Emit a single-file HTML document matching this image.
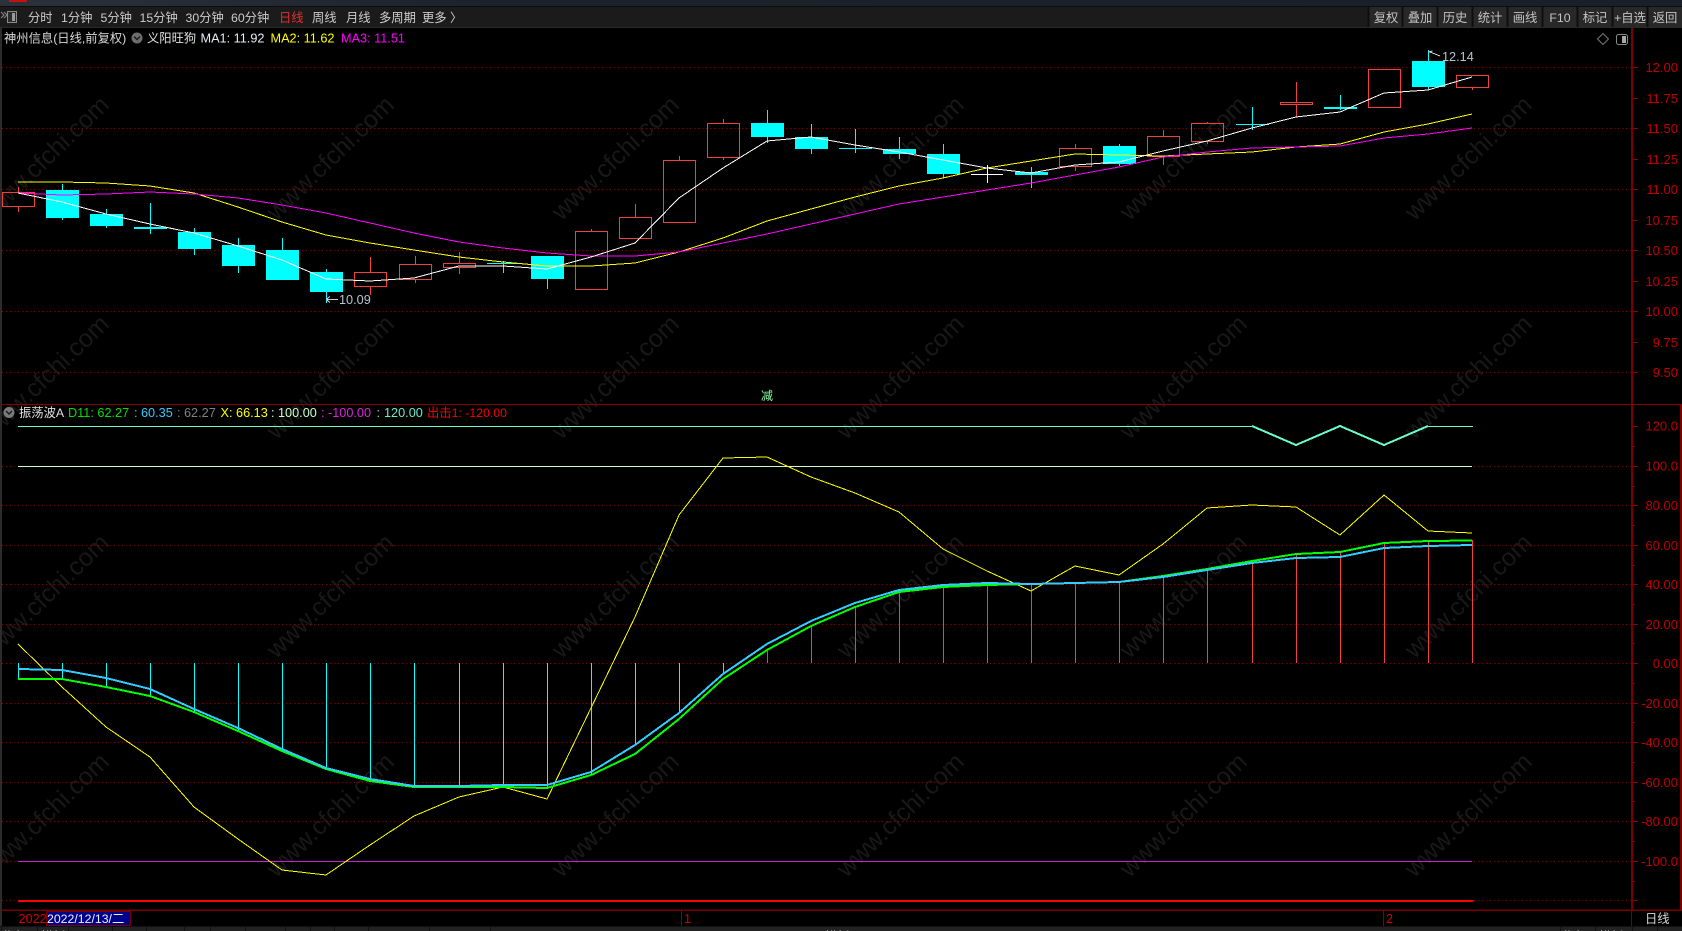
<!DOCTYPE html>
<html><head><meta charset="utf-8"><title>神州信息</title>
<style>
html,body{margin:0;padding:0;background:#000;width:1682px;height:931px;overflow:hidden}
svg{display:block}
text{font-family:"Liberation Sans","Noto Sans CJK SC",sans-serif;font-size:12.7px}
.wm text{font-size:25px;fill:#181818;text-anchor:middle}
.tb text{fill:#cccccc;font-size:12.3px}
.btn text{fill:#c4c4c4;text-anchor:middle;font-size:12.3px}
.ax text{fill:#c00000;text-anchor:end;font-size:13px}
text.cj{font-size:12.3px}
.c{shape-rendering:crispEdges}
</style></head><body>
<svg width="1682" height="931" viewBox="0 0 1682 931" xmlns="http://www.w3.org/2000/svg">
<defs><linearGradient id="tg" x1="0" x2="1" y1="0" y2="0"><stop offset="0" stop-color="#2c323c"/><stop offset=".3" stop-color="#1c222b"/><stop offset="1" stop-color="#1a2029"/></linearGradient></defs>
<rect width="1682" height="931" fill="#000"/>

<!-- watermark -->
<g class="wm">
<text transform="translate(51,164) rotate(-44)">www.cfchi.com</text><text transform="translate(336,164) rotate(-44)">www.cfchi.com</text><text transform="translate(621,164) rotate(-44)">www.cfchi.com</text><text transform="translate(906,164) rotate(-44)">www.cfchi.com</text><text transform="translate(1189,164) rotate(-44)">www.cfchi.com</text><text transform="translate(1474,164) rotate(-44)">www.cfchi.com</text>
<text transform="translate(51,383) rotate(-44)">www.cfchi.com</text><text transform="translate(336,383) rotate(-44)">www.cfchi.com</text><text transform="translate(621,383) rotate(-44)">www.cfchi.com</text><text transform="translate(906,383) rotate(-44)">www.cfchi.com</text><text transform="translate(1189,383) rotate(-44)">www.cfchi.com</text><text transform="translate(1474,383) rotate(-44)">www.cfchi.com</text>
<text transform="translate(51,602) rotate(-44)">www.cfchi.com</text><text transform="translate(336,602) rotate(-44)">www.cfchi.com</text><text transform="translate(621,602) rotate(-44)">www.cfchi.com</text><text transform="translate(906,602) rotate(-44)">www.cfchi.com</text><text transform="translate(1189,602) rotate(-44)">www.cfchi.com</text><text transform="translate(1474,602) rotate(-44)">www.cfchi.com</text>
<text transform="translate(51,821) rotate(-44)">www.cfchi.com</text><text transform="translate(336,821) rotate(-44)">www.cfchi.com</text><text transform="translate(621,821) rotate(-44)">www.cfchi.com</text><text transform="translate(906,821) rotate(-44)">www.cfchi.com</text><text transform="translate(1189,821) rotate(-44)">www.cfchi.com</text><text transform="translate(1474,821) rotate(-44)">www.cfchi.com</text>
</g>

<!-- top strips -->
<rect width="1682" height="6" fill="url(#tg)"/>
<rect x="9" y="0" width="18" height="2" fill="#c41010"/>
<rect y="6" width="1682" height="1" fill="#0c0c0c"/>
<rect y="7" width="1682" height="20" fill="#1b1b1b"/>
<g class="c">
<rect x="1369" y="7" width="313" height="20" fill="#282828"/>
<path d="M1368.5 7V27M1402.5 7V27M1437.5 7V27M1472.5 7V27M1507.5 7V27M1542.5 7V27M1577.5 7V27M1612.5 7V27M1647.5 7V27" stroke="#0e0e0e" stroke-width="2"/>
</g>
<!-- left toolbar icon -->
<path d="M1 12l3 3-3 3M4 12l3 3-3 3" stroke="#8a8a8a" fill="none"/>
<rect x="7.5" y="11.5" width="9" height="11" fill="#2a2a2a" stroke="#8a8a8a"/>
<rect x="12" y="13" width="3" height="8" fill="#9a9a9a"/>

<g class="tb">
<text x="28" y="22">分时</text><text x="61" y="22">1分钟</text><text x="100.5" y="22">5分钟</text><text x="139.5" y="22">15分钟</text><text x="185.5" y="22">30分钟</text><text x="231" y="22">60分钟</text>
<text x="279" y="22" style="fill:#e83030">日线</text><text x="312" y="22">周线</text><text x="346" y="22">月线</text><text x="379" y="22">多周期</text><text x="422" y="22">更多 〉</text>
</g>
<g class="btn">
<text x="1386" y="22">复权</text><text x="1420" y="22">叠加</text><text x="1455" y="22">历史</text><text x="1490" y="22">统计</text><text x="1525" y="22">画线</text><text x="1560" y="22">F10</text><text x="1595" y="22">标记</text><text x="1630" y="22">+自选</text><text x="1665" y="22">返回</text>
</g>

<!-- frame lines -->
<g class="c">
<rect x="0" y="27" width="2" height="899" fill="#2c2c2c"/>
<rect x="0" y="27" width="1682" height="1" fill="#2a2a2a"/>
<rect x="2" y="404" width="1680" height="1" fill="#8a0000"/>
<rect x="2" y="909.5" width="1680" height="1.5" fill="#7a0000"/>
<rect x="1631" y="28" width="2" height="882" fill="#7a0000"/>
<rect x="1631" y="910" width="1" height="16" fill="#7a0000"/>
<rect x="1680" y="404" width="2" height="506" fill="#7a0000"/>
</g>

<!-- dotted grid -->
<g class="c" stroke="#800000" stroke-dasharray="1 3" fill="none">
<path d="M2 67.5H1631M2 128.5H1631M2 189.5H1631M2 250.5H1631M2 311.5H1631M2 372.5H1631"/>
<path d="M2 466.5H1631M2 505.5H1631M2 545.5H1631M2 584.5H1631M2 624.5H1631M2 663.5H1631M2 703.5H1631M2 742.5H1631M2 782.5H1631M2 821.5H1631M2 861.5H1631M2 900.5H1631"/>
</g>

<!-- axis ticks -->
<g class="c" stroke="#8a0000" fill="none">
<path d="M1633 67.5h5M1633 98.5h5M1633 128.5h5M1633 159.5h5M1633 189.5h5M1633 220.5h5M1633 250.5h5M1633 281.5h5M1633 311.5h5M1633 342.5h5M1633 372.5h5"/>
<path d="M1633 426.5h5M1633 466.5h5M1633 505.5h5M1633 545.5h5M1633 584.5h5M1633 624.5h5M1633 663.5h5M1633 703.5h5M1633 742.5h5M1633 782.5h5M1633 821.5h5M1633 861.5h5M1633 900.5h5"/>
<path d="M1633 446.5h2M1633 486.5h2M1633 525.5h2M1633 565.5h2M1633 604.5h2M1633 643.5h2M1633 683.5h2M1633 722.5h2M1633 762.5h2M1633 801.5h2M1633 841.5h2M1633 881.5h2"/>
</g>
<g class="ax">
<text x="1678" y="72">12.00</text><text x="1678" y="103">11.75</text><text x="1678" y="133">11.50</text><text x="1678" y="164">11.25</text><text x="1678" y="194">11.00</text><text x="1678" y="225">10.75</text><text x="1678" y="255">10.50</text><text x="1678" y="286">10.25</text><text x="1678" y="316">10.00</text><text x="1678" y="347">9.75</text><text x="1678" y="377">9.50</text>
<text x="1678" y="430.5">120.0</text><text x="1678" y="470.5">100.0</text><text x="1678" y="510">80.00</text><text x="1678" y="550">60.00</text><text x="1678" y="589">40.00</text><text x="1678" y="629">20.00</text><text x="1678" y="668">0.00</text><text x="1678" y="708">-20.00</text><text x="1678" y="747">-40.00</text><text x="1678" y="787">-60.00</text><text x="1678" y="826">-80.00</text><text x="1678" y="866">-100.0</text>
</g>

<!-- candles: cyan -->
<g class="c">
<g stroke="#00ffff" fill="none">
<path d="M62.5 184V220M106.5 209V228M150.5 203V234M194.5 228V255M238.5 238V273M282.5 238V250M326.5 269V303M503.5 261V273M547.5 279V289M767.5 110V143M811.5 124V154M855.5 129V153M899.5 137V159M943.5 144V178M1031.5 167V188M1119.5 144V166M1252.5 107V130M1340.5 95V110M1428.5 50V89"/>
</g>
<g fill="#00ffff">
<rect x="46" y="190" width="33" height="28"/><rect x="90" y="214" width="33" height="12"/><rect x="134" y="227" width="33" height="2"/><rect x="178" y="232" width="33" height="17"/><rect x="222" y="245" width="33" height="21"/><rect x="266" y="250" width="33" height="30"/><rect x="310" y="272" width="33" height="20"/>
<rect x="487" y="263" width="33" height="1"/><rect x="531" y="256" width="33" height="23"/><rect x="751" y="123" width="33" height="14"/><rect x="795" y="137" width="33" height="12"/><rect x="839" y="148" width="33" height="1"/><rect x="883" y="149" width="33" height="5"/><rect x="927" y="154" width="33" height="20"/>
<rect x="1015" y="172" width="33" height="3"/><rect x="1103" y="146" width="33" height="18"/><rect x="1236" y="124" width="33" height="1"/><rect x="1324" y="107" width="33" height="2"/><rect x="1412" y="61" width="33" height="26"/>
</g>
<!-- white doji -->
<path d="M971 174.5H1003M987.5 165V183" stroke="#fff" fill="none"/>
<!-- red -->
<g stroke="#f04040" fill="none">
<path d="M18.5 187V192M18.5 206V212M370.5 257V272M370.5 286V295M415.5 256V264M415.5 279V283M459.5 252V263M459.5 267V274M591.5 229V231M635.5 204V217M679.5 156V160M723.5 119V123M723.5 157V160M1075.5 144V148M1075.5 166V171M1163.5 130V136M1163.5 156V165M1207.5 122V123M1207.5 141V144M1296.5 82V102M1296.5 104V117M1472.5 87V90"/>
<rect x="2.5" y="192.5" width="32" height="14"/><rect x="354.5" y="272.5" width="32" height="14"/><rect x="399.5" y="264.5" width="32" height="15"/><rect x="443.5" y="263.5" width="32" height="4"/><rect x="575.5" y="231.5" width="32" height="58"/><rect x="619.5" y="217.5" width="32" height="21"/><rect x="663.5" y="160.5" width="32" height="62"/><rect x="707.5" y="123.5" width="32" height="34"/><rect x="1059.5" y="148.5" width="32" height="18"/><rect x="1147.5" y="136.5" width="32" height="20"/><rect x="1191.5" y="123.5" width="32" height="18"/><rect x="1280.5" y="102.5" width="32" height="2"/><rect x="1368.5" y="69.5" width="32" height="38"/><rect x="1456.5" y="75.5" width="32" height="12"/>
</g>
</g>

<!-- MA lines -->
<g class="c" fill="none">
<polyline stroke="#ffff00" points="18,182 62,182 106,183 150,186 194,193 238,207 282,222 326,235 370,243 414,250 459,257 503,262 547,266 591,266 635,263 679,252 723,238 767,221 811,209 855,197 899,186 943,178 987,168 1031,161 1075,154 1119,155 1163,156 1207,154 1252,152 1296,147 1340,144 1384,132 1428,124 1472,114"/>
<polyline stroke="#ff00ff" points="18,193 62,195 106,194 150,192 194,194 238,198 282,205 326,213 370,223 414,233 459,242 503,248 547,253 591,256 635,256 679,252 723,243 767,234 811,224 855,214 899,204 943,197 987,190 1031,183 1075,175 1119,167 1163,157 1207,152 1252,148 1296,147 1340,146 1384,138 1428,134 1472,128"/>
<polyline stroke="#ffffff" points="18,193 62,202 106,214 150,224 194,233 238,246 282,260 326,279 370,281 414,278 459,266 503,266 547,269 591,257 635,243 679,198 723,168 767,141 811,137 855,145 899,152 943,160 987,168 1031,173 1075,165 1119,162 1163,151 1207,141 1252,128 1296,117 1340,112 1384,93 1428,90 1472,77"/>
</g>

<!-- price annotations -->
<path d="M326 299.5H338M326 299.5l4-3M326 299.5l4 3" stroke="#ccc" fill="none" class="c"/>
<text x="339" y="304" fill="#b8c4d0">10.09</text>
<path d="M1428.5 52H1430l10 4M1428.5 52l4-1" stroke="#ddd" fill="none" class="c"/>
<text x="1442" y="61" fill="#b8c4d0">12.14</text>

<!-- info rows -->
<text class="cj" x="4" y="42.5" fill="#d8d8d8">神州信息(日线,前复权)</text>
<circle cx="137" cy="38" r="5.5" fill="#6e6e6e"/><path d="M134 36.5l3 3 3-3" stroke="#1a1a1a" fill="none" stroke-width="1.4"/>
<text class="cj" x="147" y="42.5" fill="#e0e0e0">义阳旺狗</text>
<text x="200.5" y="42.5" fill="#e6eef5">MA1: 11.92</text>
<text x="270.5" y="42.5" fill="#ffff00">MA2: 11.62</text>
<text x="341" y="42.5" fill="#ff00ff">MA3: 11.51</text>

<path d="M1603 33.5l5.5 5.5-5.5 5.5-5.5-5.5z" stroke="#777" fill="none"/>
<rect x="1616.5" y="34.5" width="11" height="10" rx="2" stroke="#888" fill="none"/><rect x="1622" y="36" width="4" height="7" fill="#a8a8a8"/>

<text x="767" y="400" text-anchor="middle" style="font-size:12px" fill="#88ffaa">减</text>

<circle cx="9" cy="412.5" r="5.5" fill="#7a7a7a"/><path d="M6 411l3 3 3-3" stroke="#1a1a1a" fill="none" stroke-width="1.4"/>
<text class="cj" x="19" y="417" fill="#e0e0e0">振荡波A</text>
<text x="68" y="417" fill="#00e000">D11: 62.27</text>
<text x="134" y="417" fill="#33ccff">:</text><text x="141" y="417" fill="#33ccff">60.35</text>
<text x="177" y="417" fill="#808080">:</text><text x="184" y="417" fill="#808080">62.27</text>
<text x="220.5" y="417" fill="#ffff00">X: 66.13</text>
<text x="271" y="417" fill="#ccffcc">:</text><text x="278" y="417" fill="#ccffcc">100.00</text>
<text x="321" y="417" fill="#e020e0">:</text><text x="328" y="417" fill="#e020e0">-100.00</text>
<text x="376.5" y="417" fill="#66eecc">:</text><text x="384" y="417" fill="#66eecc">120.00</text>
<text class="cj" x="427" y="417" fill="#ff0000">出击1: -120.00</text>

<!-- histogram -->
<g class="c" fill="none">
<path stroke="#00ffff" d="M18.5 663V679M62.5 663V679M106.5 663V687M150.5 663V696M194.5 663V712M238.5 663V731M282.5 663V751M326.5 663V769M370.5 663V781M414.5 663V787M459.5 663V787M503.5 663V787M547.5 663V788M591.5 663V775M635.5 663V745M679.5 663V713M723.5 663V674"/>
<path stroke="#f04040" d="M767.5 663V650M811.5 663V626M855.5 663V607M899.5 663V592M943.5 663V587M987.5 663V585M1031.5 663V584M1075.5 663V583M1119.5 663V582M1163.5 663V576M1207.5 663V569M1252.5 663V561M1296.5 663V554M1340.5 663V552M1384.5 663V544M1428.5 663V541M1472.5 663V540"/>

<!-- reference lines -->
<path stroke="#ccffcc" d="M18 466.5H1472"/>
<path stroke="#cc22cc" d="M18 861.5H1472"/>
<path stroke="#ff0000" stroke-width="2" d="M18 901H1473"/>
<path stroke="#66ffcc" d="M18 426.5H1252M1428 426.5H1473"/>
<polyline stroke="#66ffcc" stroke-width="2" points="1252,426 1296,445 1340,426 1384,445 1428,426"/>

<!-- lines -->
<polyline stroke="#ffff00" points="18,644 62,687 106,727 150,757 194,807 238,839 282,870 326,875 370,845 414,816 459,797 503,787 547,799 591,708 635,617 679,515 723,458 767,457 811,477 855,493 899,512 943,549 987,571 1031,591 1075,566 1119,575 1163,544 1207,508 1252,505 1296,507 1340,535 1384,495 1428,531 1472,533"/>
<polyline stroke="#00ff00" stroke-width="2" points="18,679 62,679 106,687 150,696 194,712 238,731 282,751 326,769 370,781 414,787 459,787 503,787 547,788 591,775 635,754 679,719 723,679 767,650 811,626 855,607 899,592 943,587 987,585 1031,584 1075,583 1119,582 1163,576 1207,569 1252,561 1296,554 1340,552 1384,543 1428,541 1472,540.5"/>
<polyline stroke="#33ccff" stroke-width="2" points="18,669 62,670 106,678 150,689 194,709 238,728 282,749 326,768 370,779 414,786 459,786 503,785 547,785 591,772 635,745 679,713 723,674 767,644 811,621 855,603 899,590 943,585 987,583 1031,584 1075,583 1119,582 1163,577 1207,570 1252,563 1296,558 1340,557 1384,548 1428,546 1472,545"/>
</g>

<!-- date axis -->
<text x="18.5" y="923" fill="#d00000">2022</text>
<rect x="46.5" y="911.5" width="84" height="14" fill="#00008b" stroke="#7a0000"/>
<text class="cj" x="47" y="923" fill="#f0f0f0">2022/12/13/二</text>
<path class="c" d="M681.5 910V926M1383.5 910V926" stroke="#8a0000"/>
<text x="684" y="923" fill="#d00000">1</text>
<text x="1386" y="923" fill="#d00000">2</text>
<text class="cj" x="1645" y="923" fill="#d8d8d8">日线</text>

<!-- bottom strip -->
<rect y="926.5" width="1682" height="4.5" fill="#222"/>
<path class="c" stroke="#111" d="M1.5 927V931M37.5 927V931M68.5 927V931M112.5 927V931M146.5 927V931M184.5 927V931M210.5 927V931M245.5 927V931M285.5 927V931M310.5 927V931M334.5 927V931M368.5 927V931M429.5 927V931M490.5 927V931M1560.5 927V931M1595.5 927V931M1632.5 927V931M1657.5 927V931"/>
<text class="cj" x="3" y="941" fill="#d0d0d0">指标</text><text class="cj" x="41" y="941" fill="#d0d0d0">模板</text>
<text class="cj" x="825" y="941" fill="#d0d0d0">模板</text>
<text class="cj" x="1563" y="941" fill="#d0d0d0">指标</text><text class="cj" x="1599" y="941" fill="#d0d0d0">模板</text>
</svg>
</body></html>
